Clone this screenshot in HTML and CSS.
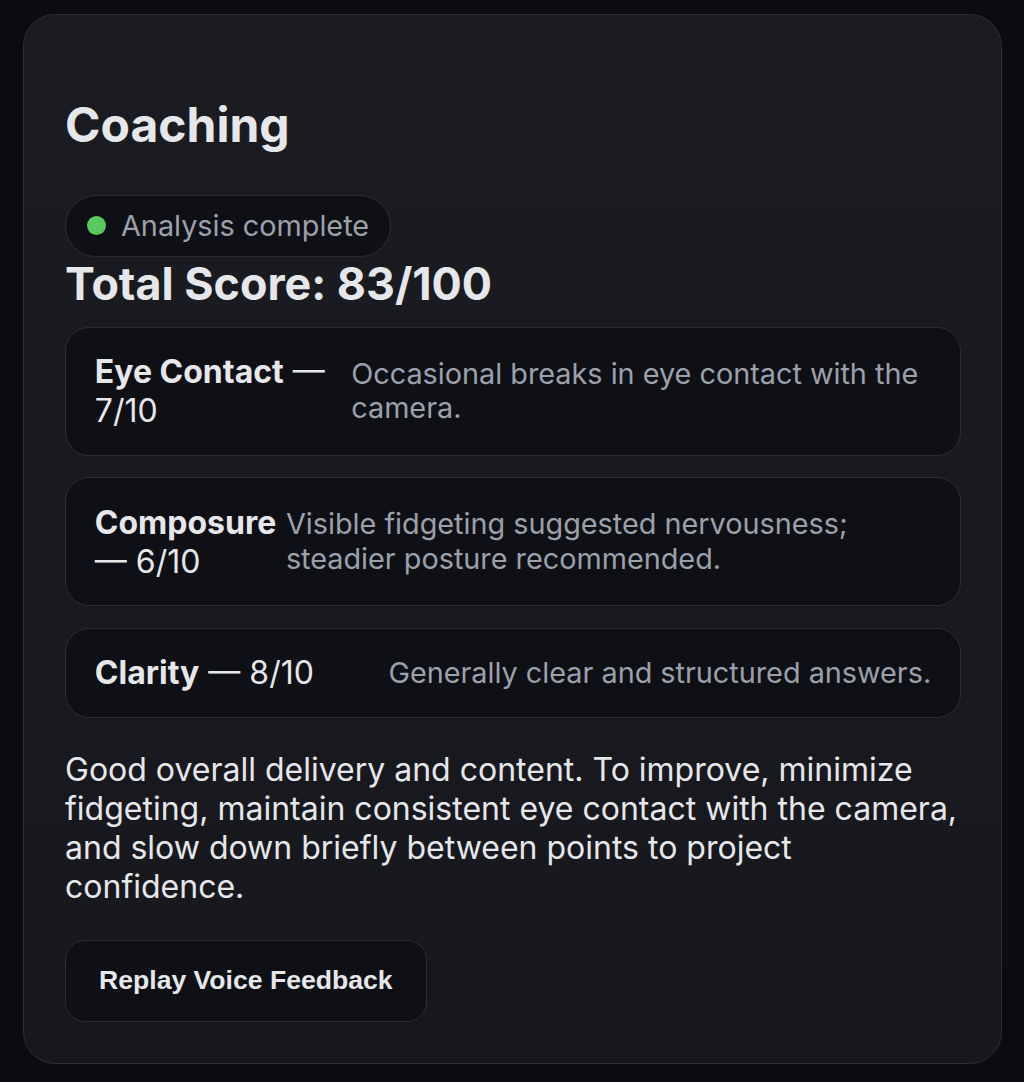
FILE: index.html
```html
<!DOCTYPE html>
<html>
<head>
<meta charset="utf-8">
<link rel="stylesheet" href="styles.css">
</head>
<body>
<div class="page">
  <section class="card">
    <h2 class="title">Coaching</h2>
    <div class="chip"><span class="dot"></span><span class="chip-text">Analysis complete</span></div>
    <div class="total">Total Score: 83/100</div>
    <div class="items">
      <div class="item">
        <div class="label"><b>Eye Contact</b> — 7/10</div>
        <div class="desc">Occasional breaks in eye contact with the camera.</div>
      </div>
      <div class="item">
        <div class="label"><b>Composure</b> — 6/10</div>
        <div class="desc">Visible fidgeting suggested nervousness; steadier posture recommended.</div>
      </div>
      <div class="item">
        <div class="label"><b>Clarity</b> — 8/10</div>
        <div class="desc">Generally clear and structured answers.</div>
      </div>
    </div>
    <p class="summary">Good overall delivery and content. To improve, minimize fidgeting, maintain consistent eye contact with the camera, and slow down briefly between points to project confidence.</p>
    <button class="btn">Replay Voice Feedback</button>
  </section>
</div>
</body>
</html>
```
FILE: styles.css
```css
html, body {
  margin: 0;
  padding: 0;
  background: #0b0c10;
}
body {
  font-family: Inter, "Noto Sans", sans-serif;
  color: #e6e7ea;
}
.page {
  padding: 14px 22px 19px 23px;
}
.card {
  background: linear-gradient(180deg, #1a1c21 0%, #17181d 100%);
  border: 1px solid #2b2e37;
  border-radius: 32px;
  padding: 40px 40px 41.5px 41px;
}
.title {
  font-size: 48px;
  font-weight: 700;
  margin: 40px 0 40px;
  color: #e6e7ea;
}
.chip {
  display: inline-flex;
  align-items: center;
  gap: 15px;
  padding: 12.6px 21px;
  border: 1px solid #2a2d38;
  border-radius: 999px;
  background: #0f1015;
  margin-top: 1px;
}
.dot {
  width: 19px;
  height: 19px;
  border-radius: 50%;
  background: #5ac85f;
}
.chip-text {
  font-size: 28.8px;
  line-height: 1.2;
  color: #9ca0ab;
}
.total {
  font-size: 44.8px;
  font-weight: 700;
  color: #e6e7ea;
}
.items {
  display: flex;
  flex-direction: column;
  gap: 21.6px;
  margin-top: 16px;
}
.item {
  display: flex;
  justify-content: space-between;
  align-items: center;
  gap: 1px;
  padding: 24.5px 28.8px;
  border: 1px solid #2a2d38;
  border-radius: 24px;
  background: #0f1015;
}
.label {
  font-size: 32px;
  line-height: 39px;
  color: #e6e7ea;
}
.label b {
  font-weight: 700;
}
.desc {
  font-size: 28.8px;
  line-height: 1.2;
  color: #9ca0ab;
}
.summary {
  font-size: 32px;
  line-height: 1.21;
  margin: 33.5px 0;
  color: #e6e7ea;
}
.btn {
  font-family: "Liberation Sans", Arial, sans-serif;
  font-weight: 700;
  font-size: 26.6px;
  line-height: 31px;
  color: #e6e7ea;
  background: #0f1015;
  border: 1px solid #2a2d38;
  border-radius: 20px;
  padding: 24.5px 33px;
}
```
